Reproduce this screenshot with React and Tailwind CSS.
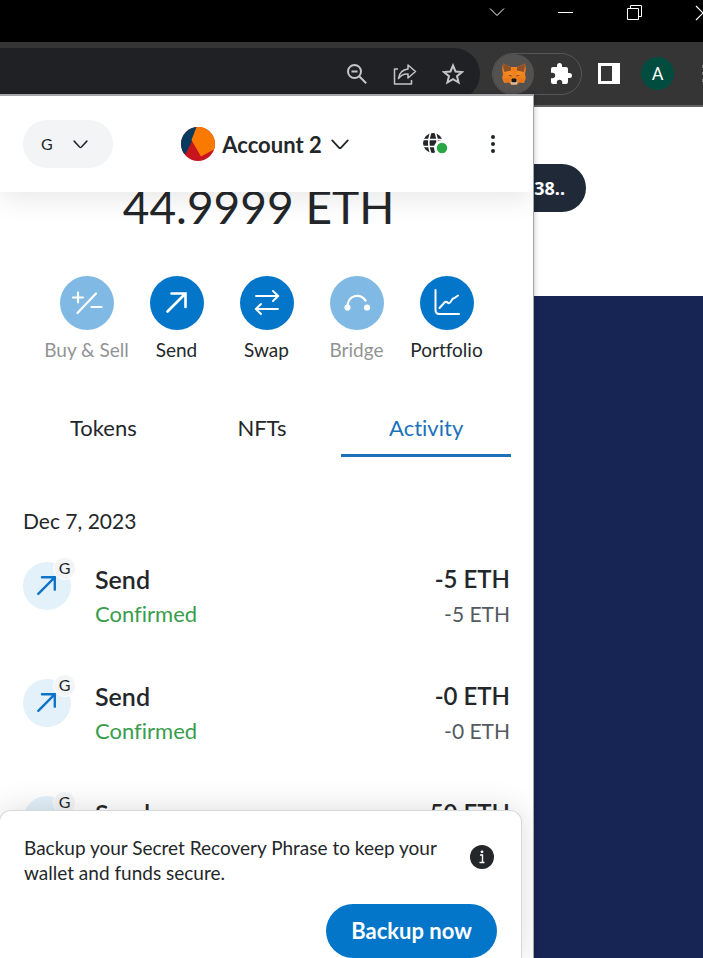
import React from "react";

function ChevronDown({ className }) {
  return (
    <svg className={className} viewBox="0 0 20 12" fill="none" stroke="currentColor" strokeWidth="2" strokeLinecap="round" strokeLinejoin="round" aria-hidden="true">
      <path d="M1.5 1.5 8.8 9.3Q10 10.5 11.2 9.3L18.5 1.5" />
    </svg>
  );
}

function ArrowUpRight({ className }) {
  return (
    <svg className={className} viewBox="0 0 24 24" fill="none" stroke="currentColor" strokeWidth="2.6" strokeLinecap="round" strokeLinejoin="miter" aria-hidden="true">
      <path d="M2.500 20.500 19.500 3.500M6.500 2.500H20.500V16" />
    </svg>
  );
}

function Fox() {
  return (
    <svg className="h-[22px] w-6" viewBox="0 0 24 22" aria-hidden="true">
      <path d="M1 .5 8.500 4h7L23 .5l.8 6-.8 4.500.8 4-1.800 5-4.600-.8-2.600 2.600H9.200l-2.600-2.600-4.600.8-1.800-5 .8-4L.2 6.500z" fill="#f0811d" />
      <path d="M1 .5 8.800 4.200l.4 3.300L2.500 9 1.500 6zM23 .5l-7.800 3.700-.4 3.300L21.500 9l1-3z" fill="#8f5026" />
      <path d="M2 9.500 9.200 7.500l.6 5-3.300-.5zM22 9.500l-7.200-2-.6 5 3.300-.5z" fill="#f58a22" />
      <path d="m2 15.500 5.500-.5 1.500 4-2.200.2-4 .6zM22 15.500l-5.500-.5-1.500 4 2.200.2 4 .6z" fill="#e8771c" />
      <path d="m6 12 3.200.3.500 1.500zM18 12l-3.200.3-.5 1.500z" fill="#5a4630" />
      <path d="M8.500 17.500h7l-1 4h-5z" fill="#d6c0b3" />
      <path d="M9.600 16.400 10.200 15.600h3.600l.6.8.2 2-1 .8h-3.200l-1-.8z" fill="#161616" />
    </svg>
  );
}

function TitleBar() {
  return (
    <div className="flex h-[42px] shrink-0 items-start justify-end bg-black text-white">
      <button type="button" aria-label="Search tabs" className="flex h-[25px] w-[68px] items-center justify-center">
        <svg className="h-[9px] w-4" viewBox="0 0 16 9" fill="none" stroke="currentColor" strokeWidth="1"><path d="m1 .5 7 7 7-7" /></svg>
      </button>
      <button type="button" aria-label="Minimize" className="flex h-[25px] w-[68px] items-center justify-center">
        <span className="h-px w-[15px] bg-white" />
      </button>
      <button type="button" aria-label="Restore" className="flex h-[25px] w-[70px] items-center justify-center">
        <svg className="h-4 w-4" viewBox="0 0 16 16" fill="none" stroke="currentColor" strokeWidth="1"><path d="M1.500 3.500h11v11h-11zM4.500 3.500v-3h11v11h-3" /></svg>
      </button>
      <button type="button" aria-label="Close" className="flex h-[25px] w-[34px] items-center justify-end overflow-hidden">
        <svg className="-mr-2 h-4 w-4 shrink-0" viewBox="0 0 16 16" fill="none" stroke="currentColor" strokeWidth="1.200"><path d="m1 1 14 14M15 1 1 15" /></svg>
      </button>
    </div>
  );
}

function Toolbar() {
  return (
    <div className="flex h-[65px] shrink-0 items-start overflow-hidden border-b-2 border-[#626262] bg-[#353535] pt-[6px]">
      <div className="flex h-[52px] flex-1 items-center justify-end gap-[25px] rounded-r-full bg-[#202124] pr-4 text-[#c4c5c8]">
        <button type="button" aria-label="Zoom">
          <svg className="h-[22px] w-[22px]" viewBox="0 0 22 22" fill="none" stroke="currentColor" strokeWidth="2"><circle cx="8.500" cy="8.500" r="6.500" /><path d="m13.200 13.200 7 7M5.500 8.500h6" /></svg>
        </button>
        <button type="button" aria-label="Share">
          <svg className="h-[22px] w-6" viewBox="0 0 24 22" fill="none" stroke="currentColor" strokeWidth="1.500" strokeLinejoin="round"><path d="M5 6H1.500v15h17v-4M15 2l7.500 6.500L15 15v-4Q9 10.500 5.500 15.500 6.500 7 15 6z" /></svg>
        </button>
        <button type="button" aria-label="Bookmark this tab">
          <svg className="h-[22px] w-[22px]" viewBox="0 0 22 22" fill="none" stroke="currentColor" strokeWidth="2"><path d="m11 2.500 2.500 6 6.500.500-5 4.200 1.600 6.300L11 16.100l-5.600 3.400L7 13.200 2 9l6.500-.500z" /></svg>
        </button>
      </div>
      <div className="ml-3 mt-[5px] flex h-[42px] w-[90px] shrink-0 items-center rounded-full border border-[#565656]">
        <button type="button" aria-label="MetaMask" className="flex h-[40px] w-[41px] items-center justify-center rounded-full bg-[#535250]"><Fox /></button>
        <button type="button" aria-label="Extensions" className="flex flex-1 items-center justify-center pl-[6px] text-white">
          <svg className="h-6 w-6" viewBox="0 0 24 24" fill="currentColor"><path d="M20.500 11H19V7a2 2 0 0 0-2-2h-4V3.500a2.500 2.500 0 0 0-5 0V5H4a2 2 0 0 0-2 2v3.800h1.500a2.700 2.700 0 0 1 0 5.400H2V20a2 2 0 0 0 2 2h3.800v-1.500a2.700 2.700 0 0 1 5.400 0V22H17a2 2 0 0 0 2-2v-4h1.500a2.500 2.500 0 0 0 0-5z" /></svg>
        </button>
      </div>
      <div className="ml-4 mt-1 flex h-[42px] shrink-0 items-center">
        <button type="button" aria-label="Side panel" className="h-[21px] w-[22px] border-[3px] border-r-8 border-white" />
        <button type="button" aria-label="Profile" className="ml-[21px] flex h-[33px] w-[33px] items-center justify-center rounded-full bg-[#004d40] font-['Roboto',sans-serif] text-[18px] text-white">A</button>
        <button type="button" aria-label="Browser menu" className="ml-7 flex w-px flex-col gap-1 overflow-hidden">
          <span className="h-[3px] w-[3px] bg-[#77777a]" /><span className="h-[3px] w-[3px] bg-[#77777a]" /><span className="h-[3px] w-[3px] bg-[#77777a]" />
        </button>
      </div>
    </div>
  );
}

function WebPage() {
  return (
    <div className="flex flex-1 flex-col">
      <div className="flex h-[189px] items-start justify-end bg-white pr-[117px] pt-[57px]">
        <button type="button" className="h-12 rounded-full bg-[#1f2937] pl-6 pr-[21px] font-['Noto_Sans',sans-serif] text-[18px] font-bold text-white">38..</button>
      </div>
      <div className="flex-1 bg-[#172554]" />
    </div>
  );
}

function WalletHeader() {
  return (
    <header className="relative z-10 flex h-24 shrink-0 items-center justify-between bg-white pl-[23px] pr-[31px] shadow-[0_4px_28px_rgba(0,0,0,0.11)]">
      <button type="button" aria-label="Network G" className="flex h-12 w-[90px] items-center gap-5 rounded-full bg-[#f2f4f6] pl-[18px] text-[16px]">
        G
        <ChevronDown className="h-[9px] w-[15px]" />
      </button>
      <button type="button" className="-ml-1 flex items-center text-[22px] font-bold">
        <svg className="mr-[7px] h-[34px] w-[34px] rounded-full" viewBox="0 0 34 34" aria-hidden="true">
          <rect width="34" height="34" fill="#c8141d" />
          <path d="M0 0h16L11 14 4.500 27H0z" fill="#063a5f" />
          <path d="M15.500 0H34v22L20 29.500 10.500 13z" fill="#fa7900" />
        </svg>
        Account 2
        <ChevronDown className="ml-2 h-[11px] w-5" />
      </button>
      <div className="flex items-center gap-9">
        <button type="button" aria-label="Connected sites">
          <svg className="h-[22px] w-[26px]" viewBox="0 0 26 22">
            <circle cx="11" cy="10" r="10" fill="#24272a" />
            <path d="M0 6.500h22M0 13.500h22M8.500 0Q5 10 8.500 20M13.500 0Q17 10 13.500 20" stroke="#fff" strokeWidth="1.600" fill="none" />
            <circle cx="20" cy="15" r="8" fill="#fff" />
            <circle cx="20" cy="15" r="5.200" fill="#28a745" />
          </svg>
        </button>
        <button type="button" aria-label="Account options" className="flex w-[18px] flex-col items-center gap-[3px]">
          <span className="h-1 w-1 rounded-full bg-[#24272a]" /><span className="h-1 w-1 rounded-full bg-[#24272a]" /><span className="h-1 w-1 rounded-full bg-[#24272a]" />
        </button>
      </div>
    </header>
  );
}

const actions = [
  { label: "Buy & Sell", disabled: true, icon: <svg className="h-8 w-8" viewBox="0 0 32 32" fill="none" stroke="currentColor" strokeWidth="2.200" strokeLinecap="round"><path d="M6.500 26 25 6.500M2 10.500h10M7 5.500v10M20.500 20h10" /></svg> },
  { label: "Send", icon: <ArrowUpRight className="h-6 w-6" /> },
  { label: "Swap", icon: <svg className="h-7 w-7" viewBox="0 0 28 28" fill="none" stroke="currentColor" strokeWidth="1.900" strokeLinecap="round"><path d="M3 7h22M20 2l5.200 5-5.200 5M25 20H3M8 15l-5.200 5L8 25" /></svg> },
  { label: "Bridge", disabled: true, icon: <svg className="h-7 w-7" viewBox="0 0 28 28" fill="none" stroke="currentColor" strokeWidth="2.200" strokeLinecap="round"><path d="M4.500 18.500C4.500 5.500 17 4 22.500 11.500" /><circle cx="4.500" cy="18.500" r="2" fill="currentColor" /><circle cx="24" cy="18.500" r="2" fill="currentColor" /></svg> },
  { label: "Portfolio", icon: <svg className="h-7 w-7" viewBox="0 0 28 28" fill="none" stroke="currentColor" strokeWidth="2" strokeLinecap="round" strokeLinejoin="round"><path d="M2.500 1v20q0 4 4 4H26M6.500 19l5-5.500q1.500-1.500 3 0t3-.500l2-3q.500-1 2-1L25 6.500" /></svg> },
];

const rows = [
  { amount: "-5 ETH" },
  { amount: "-0 ETH" },
  { amount: "-50 ETH" },
];

function Activity({ amount }) {
  return (
    <li className="flex h-[117px] items-start">
      <div className="relative mt-1 flex h-12 w-12 items-center justify-center rounded-full bg-[#e3f1fa] text-[#0d74c7]">
        <ArrowUpRight className="h-[22px] w-[22px]" />
        <span className="absolute -right-[5px] -top-[5px] flex h-[23px] w-[23px] items-center justify-center rounded-full border border-white bg-[#f2f4f6] pb-[2px] text-[16px] text-[#24272a]">G</span>
      </div>
      <div className="ml-6 flex-1">
        <p className="text-[25px] font-semibold leading-[42px]">Send</p>
        <p className="text-[22px] leading-[28px] text-[#389d4c]">Confirmed</p>
      </div>
      <div className="text-right">
        <p className="text-[24px] font-semibold leading-[42px]">{amount}</p>
        <p className="text-[21px] leading-[28px] text-[#535a61]">{amount}</p>
      </div>
    </li>
  );
}

function Backup() {
  return (
    <aside className="absolute -left-px -right-px bottom-0 mr-3 h-[148px] overflow-hidden rounded-t-xl border border-b-0 border-[#d6d9dc] bg-white pl-6 pr-6 pt-6 shadow-[0_0_32px_rgba(0,0,0,0.14)]">
      <div className="flex items-center justify-between">
        <p className="w-[430px] text-[19px] leading-[25px]">Backup your Secret Recovery Phrase to keep your wallet and funds secure.</p>
        <button type="button" aria-label="More information" className="mb-[6px] mr-[3px]">
          <svg className="h-6 w-6" viewBox="0 0 24 24"><circle cx="12" cy="12" r="12" fill="#24272a" /><path d="M10 10h2.500v7M9.500 17.500h5" stroke="#fff" strokeWidth="1.400" fill="none" /><circle cx="12" cy="6.800" r="1.400" fill="#fff" /></svg>
        </button>
      </div>
      <div className="mt-[19px] flex justify-end">
        <button type="button" className="h-[54px] w-[171px] rounded-full bg-[#0376c9] pb-[2px] text-[22px] font-bold text-white">Backup now</button>
      </div>
    </aside>
  );
}

function Wallet() {
  return (
    <section className="absolute bottom-0 left-0 right-[169px] top-[94px] flex flex-col overflow-hidden border-r border-t-2 border-[#a4a6a9] bg-white text-[#24272a] shadow-[1px_0_5px_rgba(0,0,0,0.2)]">
      <WalletHeader />
      <div className="min-h-0 flex-1 overflow-hidden">
        <p className="-mt-[15px] pr-4 text-center text-[46px] leading-[60px]">44.9999 ETH</p>
        <div className="mt-[39px] flex justify-center">
          {actions.map((a) => (
            <button key={a.label} type="button" disabled={a.disabled} className={a.disabled ? "flex w-[90px] flex-col items-center opacity-50" : "flex w-[90px] flex-col items-center"}>
              <span className="flex h-[54px] w-[54px] items-center justify-center rounded-full bg-[#0376c9] text-white">{a.icon}</span>
              <span className="mt-[7px] whitespace-nowrap text-[19px] leading-[26px]">{a.label}</span>
            </button>
          ))}
        </div>
        <div role="tablist" className="ml-6 mr-[22px] mt-[41px] flex text-[22px]">
          <button type="button" role="tab" aria-selected="false" className="h-[53px] flex-[159] pb-[6px]">Tokens</button>
          <button type="button" role="tab" aria-selected="false" className="h-[53px] flex-[159] pb-[6px]">NFTs</button>
          <button type="button" role="tab" aria-selected="true" className="h-[53px] flex-[170] border-b-[3px] border-[#1b72bb] pb-[3px] text-[#1b72bb]">Activity</button>
        </div>
        <div className="pl-[23px] pr-[23px] pt-[49px]">
          <h2 className="text-[21px] leading-[30px]">Dec 7, 2023</h2>
          <ul className="mt-[22px]">
            {rows.map((r) => <Activity key={r.amount} amount={r.amount} />)}
          </ul>
        </div>
      </div>
      <Backup />
    </section>
  );
}

export default function App() {
  return (
    <main className="relative flex h-screen flex-col overflow-hidden bg-white font-['Lato',sans-serif] [font-variant-ligatures:none]">
      <TitleBar />
      <Toolbar />
      <WebPage />
      <Wallet />
    </main>
  );
}
